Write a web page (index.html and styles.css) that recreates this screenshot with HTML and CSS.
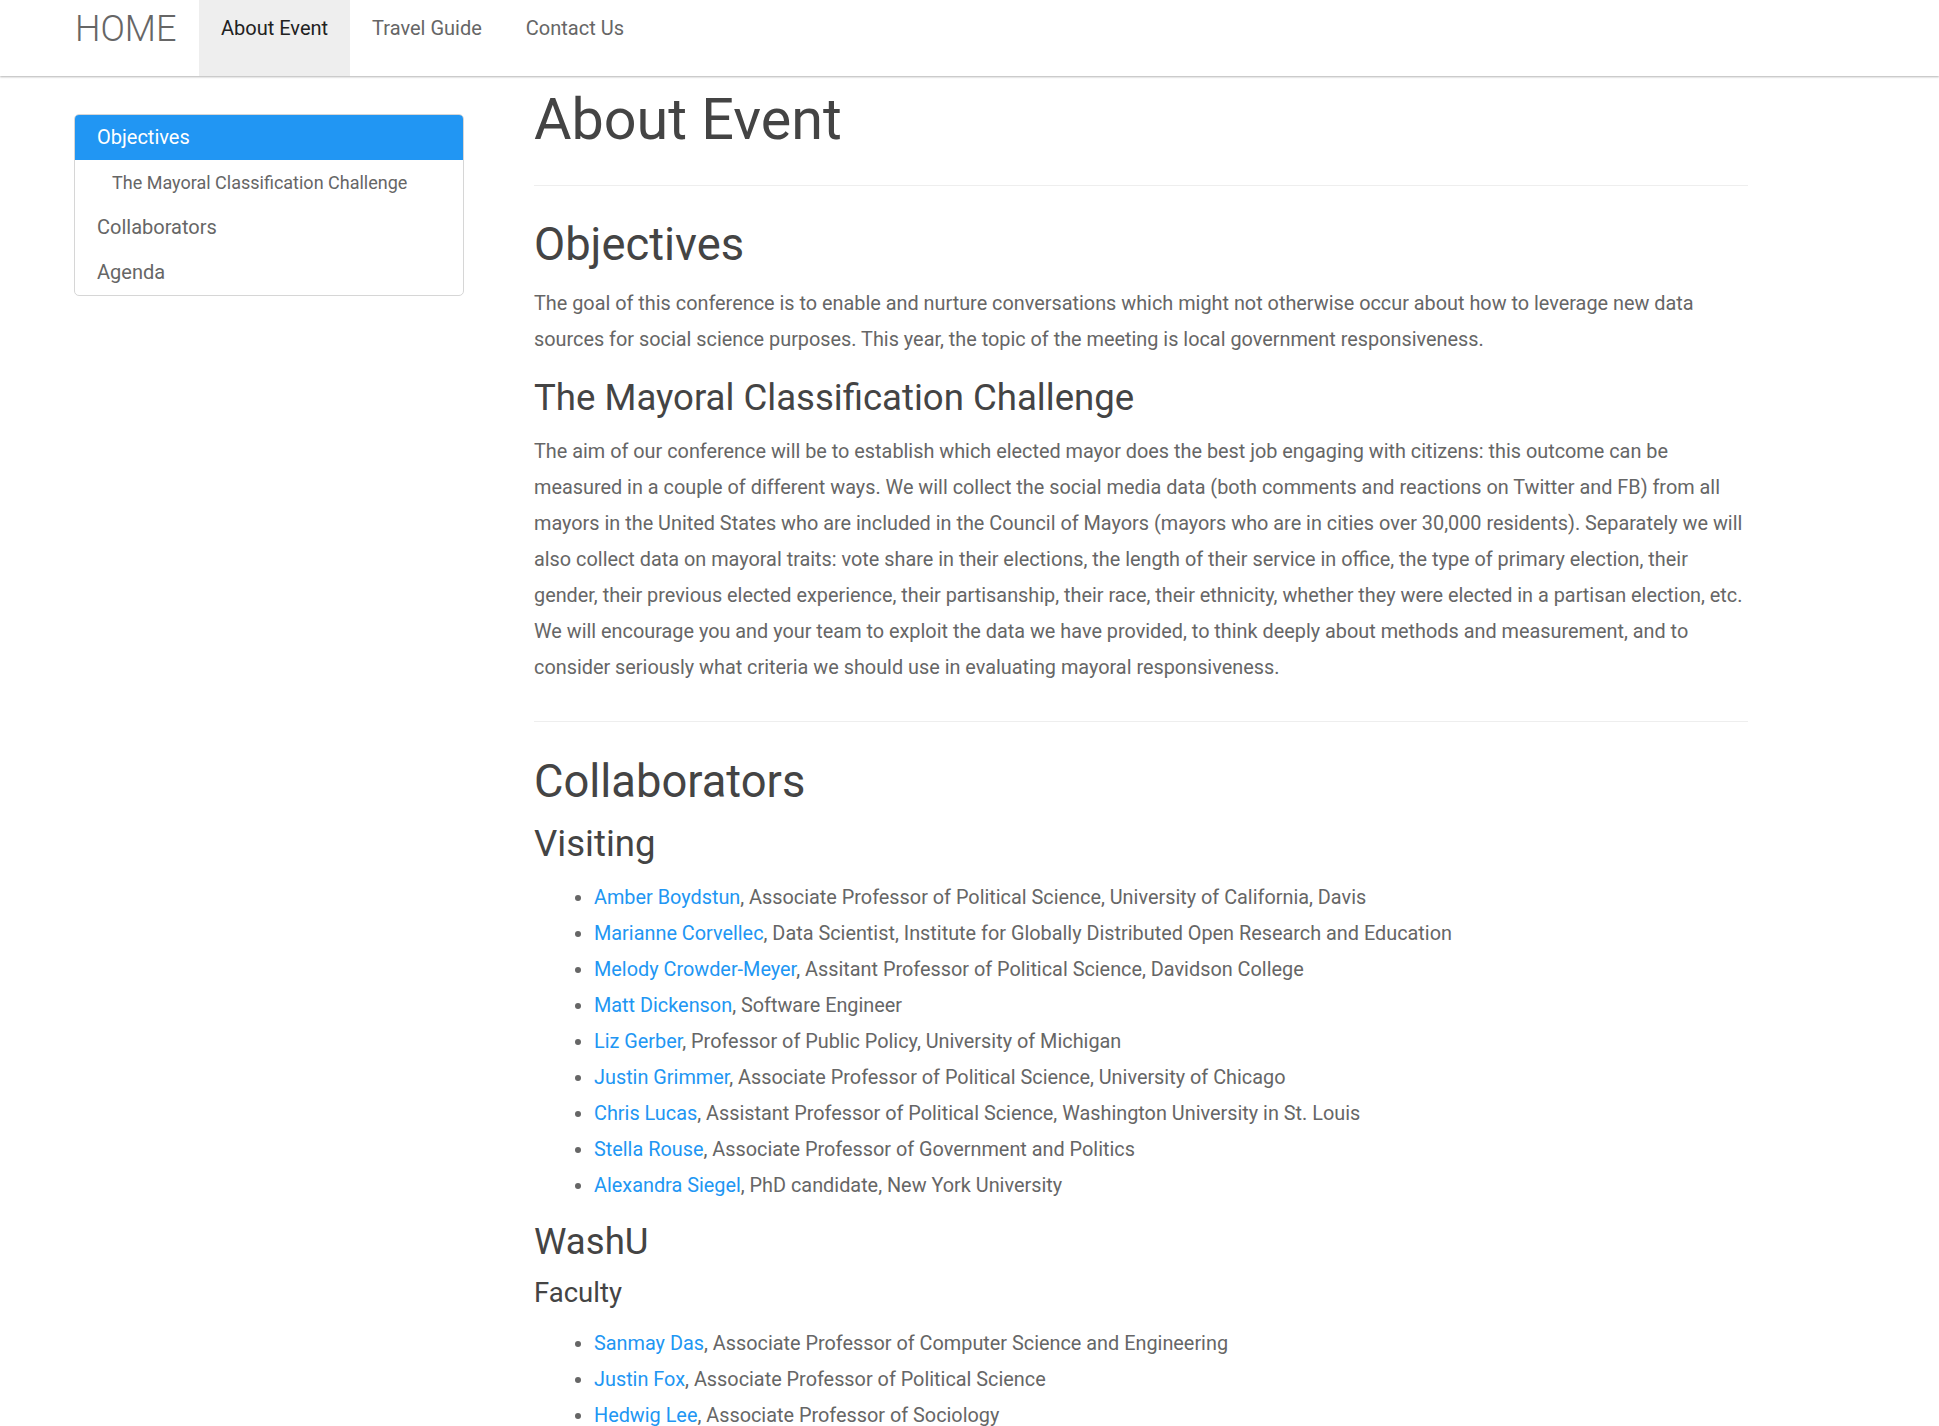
FILE: index.html
```html
<!DOCTYPE html>
<html lang="en">
<head>
<meta charset="utf-8">
<title>About Event</title>
<link rel="stylesheet" href="styles.css">
</head>
<body>
<header class="navbar">
  <a class="brand" href="#">HOME</a>
  <nav class="nav">
    <a class="nav-item active" href="#">About Event</a>
    <a class="nav-item" href="#">Travel Guide</a>
    <a class="nav-item" href="#">Contact Us</a>
  </nav>
</header>

<div class="layout">
  <aside class="sidebar">
    <ul class="side-list">
      <li><a class="side-item active" href="#objectives">Objectives</a></li>
      <li><a class="side-item sub" href="#challenge">The Mayoral Classification Challenge</a></li>
      <li><a class="side-item" href="#collaborators">Collaborators</a></li>
      <li><a class="side-item" href="#agenda">Agenda</a></li>
    </ul>
  </aside>

  <main class="content">
    <h1 class="page-title">About Event</h1>
    <hr class="divider">

    <h2 id="objectives">Objectives</h2>
    <p>The goal of this conference is to enable and nurture conversations which might not otherwise occur about how to leverage new data sources for social science purposes. This year, the topic of the meeting is local government responsiveness.</p>

    <h3 id="challenge">The Mayoral Classification Challenge</h3>
    <p class="last">The aim of our conference will be to establish which elected mayor does the best job engaging with citizens: this outcome can be measured in a couple of different ways. We will collect the social media data (both comments and reactions on Twitter and FB) from all mayors in the United States who are included in the Council of Mayors (mayors who are in cities over 30,000 residents). Separately we will also collect data on mayoral traits: vote share in their elections, the length of their service in office, the type of primary election, their gender, their previous elected experience, their partisanship, their race, their ethnicity, whether they were elected in a partisan election, etc. We will encourage you and your team to exploit the data we have provided, to think deeply about methods and measurement, and to consider seriously what criteria we should use in evaluating mayoral responsiveness.</p>

    <hr class="divider second">

    <h2 id="collaborators">Collaborators</h2>
    <h3>Visiting</h3>
    <ul class="people">
      <li><a href="#">Amber Boydstun</a>, Associate Professor of Political Science, University of California, Davis</li>
      <li><a href="#">Marianne Corvellec</a>, Data Scientist, Institute for Globally Distributed Open Research and Education</li>
      <li><a href="#">Melody Crowder-Meyer</a>, Assitant Professor of Political Science, Davidson College</li>
      <li><a href="#">Matt Dickenson</a>, Software Engineer</li>
      <li><a href="#">Liz Gerber</a>, Professor of Public Policy, University of Michigan</li>
      <li><a href="#">Justin Grimmer</a>, Associate Professor of Political Science, University of Chicago</li>
      <li><a href="#">Chris Lucas</a>, Assistant Professor of Political Science, Washington University in St. Louis</li>
      <li><a href="#">Stella Rouse</a>, Associate Professor of Government and Politics</li>
      <li><a href="#">Alexandra Siegel</a>, PhD candidate, New York University</li>
    </ul>

    <h3>WashU</h3>
    <h4>Faculty</h4>
    <ul class="people">
      <li><a href="#">Sanmay Das</a>, Associate Professor of Computer Science and Engineering</li>
      <li><a href="#">Justin Fox</a>, Associate Professor of Political Science</li>
      <li><a href="#">Hedwig Lee</a>, Associate Professor of Sociology</li>
    </ul>
  </main>
</div>
</body>
</html>
```

FILE: styles.css
```css
* {
  box-sizing: border-box;
}

html, body {
  margin: 0;
  padding: 0;
  background: #ffffff;
}

body {
  font-family: Roboto, "Liberation Sans", Arial, sans-serif;
  font-size: 19.85px;
  line-height: 36px;
  color: #666666;
}

a {
  text-decoration: none;
}

/* ---------- navbar ---------- */
.navbar {
  display: flex;
  height: 76px;
  padding-left: 75px;
  background: #ffffff;
  box-shadow: 0 1px 2px rgba(0, 0, 0, 0.3);
  position: relative;
  z-index: 2;
}

.brand {
  width: 124px;
  padding-top: 9px;
  font-size: 36px;
  font-weight: 300;
  line-height: 40px;
  color: #666666;
}

.nav {
  display: flex;
}

.nav-item {
  display: block;
  padding: 16px 22px 36px;
  font-size: 20px;
  line-height: 24px;
  color: #666666;
}

.nav-item.active {
  background: #eeeeee;
  color: #212121;
}

/* ---------- layout ---------- */
.layout {
  display: flex;
  align-items: flex-start;
  gap: 70px;
  padding: 12px 0 0 74px;
}

.sidebar {
  width: 390px;
  flex: none;
  margin-top: 26px;
}

.side-list {
  list-style: none;
  margin: 0;
  padding: 0;
  border: 1px solid #d6d6d6;
  border-radius: 5px;
  overflow: hidden;
}

.side-item {
  display: block;
  padding: 10px 22px;
  font-size: 20px;
  line-height: 25px;
  color: #666666;
}

.side-item.active {
  background: #2196f3;
  color: #ffffff;
}

.side-item.sub {
  padding-left: 37px;
  font-size: 18px;
}

/* ---------- content ---------- */
.content {
  width: 1214px;
  flex: none;
}

h1, h2, h3, h4 {
  font-weight: 400;
  color: #444444;
  margin: 0;
}

.page-title {
  font-size: 57.5px;
  line-height: 63px;
}

.divider {
  border: 0;
  border-top: 1px solid #eeeeee;
  margin: 34px 0;
}

.divider.second {
  margin: 35px 0;
}

h2 {
  font-size: 45.3px;
  line-height: 50px;
  margin-bottom: 16px;
}

h3 {
  font-size: 36.6px;
  line-height: 41px;
  margin-bottom: 16px;
}

h4 {
  font-size: 27.5px;
  line-height: 30px;
  margin-bottom: 18px;
}

p {
  margin: 0 0 19px;
}

p.last {
  margin-bottom: 0;
}

.people {
  margin: 0 0 17px;
  padding-left: 60px;
}

.people li {
  line-height: 36px;
}

.people a {
  color: #2196f3;
}
```
